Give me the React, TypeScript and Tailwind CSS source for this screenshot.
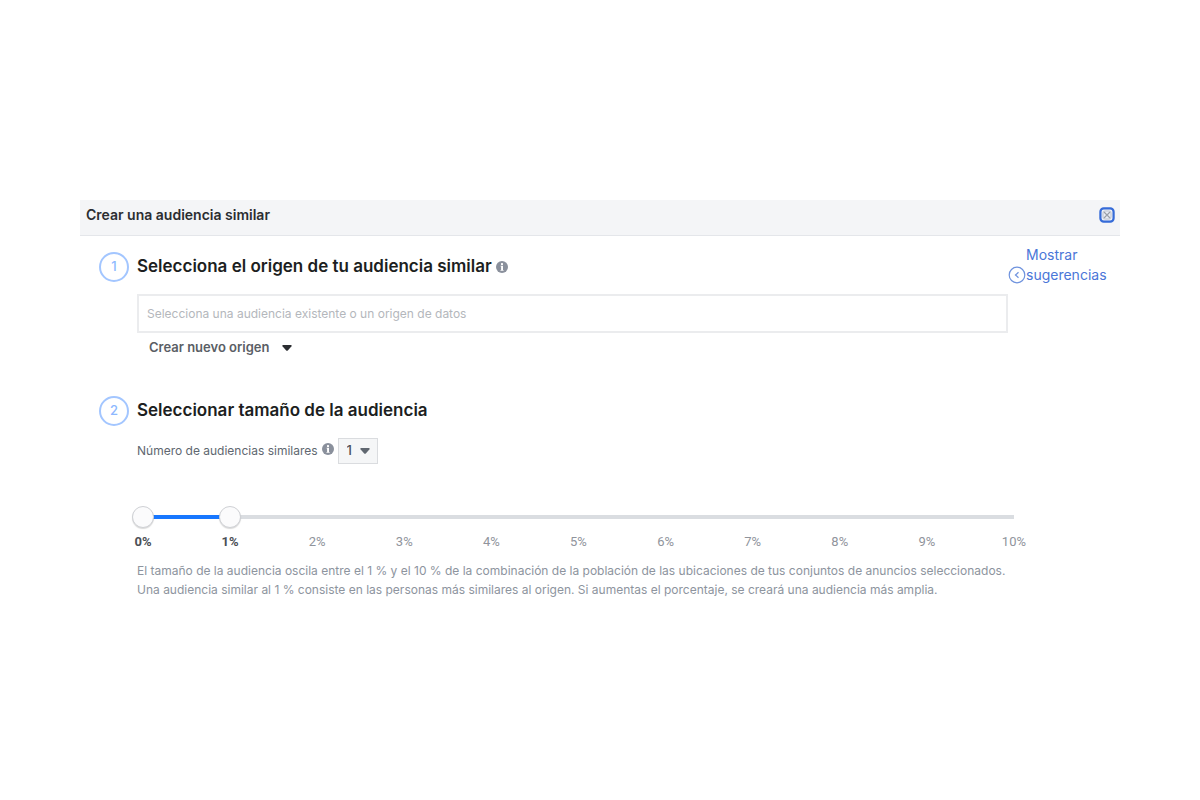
import React, { useState } from "react";

const MAX_PERCENT = 10;
const ticks = Array.from({ length: MAX_PERCENT + 1 }, (_, i) => i);

const thumbClasses =
  "pointer-events-none absolute inset-0 h-[22px] w-full appearance-none bg-transparent outline-none [&::-webkit-slider-thumb]:pointer-events-auto [&::-webkit-slider-thumb]:size-[22px] [&::-webkit-slider-thumb]:cursor-pointer [&::-webkit-slider-thumb]:appearance-none [&::-webkit-slider-thumb]:rounded-full [&::-webkit-slider-thumb]:border [&::-webkit-slider-thumb]:border-[#cfd1d5] [&::-webkit-slider-thumb]:bg-[#fbfbfc] [&::-webkit-slider-thumb]:shadow-[0_1px_1px_rgba(0,0,0,0.15)]";

function InfoIcon() {
  return (
    <svg viewBox="0 0 12 12" className="size-3 shrink-0" aria-hidden="true">
      <circle cx="6" cy="6" r="6" fill="#8a909c" />
      <rect x="5" y="2" width="2" height="2" rx="0.6" fill="#fff" />
      <path d="M4.6 4.8H7V9h.6v.8H4.5V9h.6V5.6h-.5z" fill="#fff" />
    </svg>
  );
}

function Caret({ className }: { className: string }) {
  return (
    <svg viewBox="0 0 10 6" className={className} aria-hidden="true">
      <path d="M1 0h8q1 .3.5 1.2L5.8 5.4q-.8.8-1.6 0L.5 1.2Q0 .3 1 0z" fill="currentColor" />
    </svg>
  );
}

function StepNumber({ value }: { value: number }) {
  return (
    <span className="flex size-[30px] shrink-0 items-center justify-center rounded-full border-2 border-[#a3c6ff] text-[13px] font-medium text-[#8db8ff]">
      {value}
    </span>
  );
}

export default function App() {
  const [source, setSource] = useState("");
  const [count, setCount] = useState("1");
  const [from, setFrom] = useState(0);
  const [to, setTo] = useState(1);

  const low = Math.min(from, to);
  const high = Math.max(from, to);

  return (
    <main className="min-h-screen bg-white px-20 pt-50 font-['Inter',sans-serif]">
      <header className="flex h-9 items-center justify-between border-b border-[#e4e6ea] bg-[#f4f5f7] pr-[5px] pl-1.5">
        <h1 className="pb-1.5 text-sm font-semibold text-[#2b2d31]">Crear una audiencia similar</h1>
        <button type="button" aria-label="Cerrar" className="mb-1.5">
          <svg viewBox="0 0 16 16" className="size-4" fill="none">
            <rect x="1.4" y="1.4" width="13.2" height="13.2" rx="3.4" fill="#e9edf5" stroke="#356bd8" strokeWidth="2.2" />
            <path d="M5 5l6 6M11 5l-6 6" stroke="#9a9fa8" strokeWidth="1.2" />
            <rect x="4" y="4" width="8" height="8" rx="2" stroke="#b5bac4" strokeWidth="0.8" />
          </svg>
        </button>
      </header>

      {/* Paso 1: origen */}
      <section className="flex gap-2 pt-4 pl-[19px]">
        <StepNumber value={1} />
        <div className="min-w-0 flex-1">
          <h2 className="flex h-[30px] items-center gap-1 text-[17px] font-semibold text-[#1c1e21]">
            <label htmlFor="source">Selecciona el origen de tu audiencia similar</label>
            <InfoIcon />
          </h2>
          <input
            id="source"
            type="text"
            value={source}
            onChange={(e) => setSource(e.target.value)}
            placeholder="Selecciona una audiencia existente o un origen de datos"
            className="mt-3 block h-[39px] w-full border-2 border-[#ebecee] px-2 text-xs outline-none placeholder:text-[#b4b7bc]"
          />
          <button
            type="button"
            className="mt-[5px] ml-3 flex h-5 items-center gap-3 text-[13px] font-semibold text-[#5a5e65]"
          >
            Crear nuevo origen
            <Caret className="h-1.5 w-2.5 text-[#2b2d31]" />
          </button>
        </div>
        <a href="#sugerencias" className="-mt-[7px] -ml-2 flex h-10 w-28 items-end text-sm leading-5 text-[#4a76d8]">
          <svg viewBox="0 0 18 18" className="mb-px size-[18px] shrink-0" fill="none" stroke="#6f93de" aria-hidden="true">
            <circle cx="9" cy="9" r="7.8" strokeWidth="1.2" />
            <path d="M10.5 6.3L7.5 9l3 2.7" strokeWidth="1.3" />
          </svg>
          <span>
            Mostrar
            <br />
            sugerencias
          </span>
        </a>
      </section>

      {/* Paso 2: tamaño */}
      <section className="flex gap-2 pt-[38px] pr-28 pl-[19px]">
        <StepNumber value={2} />
        <div className="min-w-0 flex-1">
          <h2 className="flex h-[30px] items-center text-[17px] font-semibold text-[#1c1e21]">
            Seleccionar tamaño de la audiencia
          </h2>
          <div className="mt-3 flex h-[26px] items-center">
            <label htmlFor="count" className="text-xs text-[#606770]">
              Número de audiencias similares
            </label>
            <span className="mr-1 mb-1 ml-1 flex">
              <InfoIcon />
            </span>
            <div className="relative">
              <select
                id="count"
                value={count}
                onChange={(e) => setCount(e.target.value)}
                className="block h-[26px] w-10 appearance-none border border-[#dadcdf] bg-[#f5f6f7] pl-2 text-[13px] font-medium text-[#4b4f56]"
              >
                {["1", "2", "3", "4", "5", "6"].map((n) => (
                  <option key={n}>{n}</option>
                ))}
              </select>
              <Caret className="pointer-events-none absolute top-2.5 right-2 h-1.5 w-2.5 text-[#606770]" />
            </div>
          </div>

          <div className="relative -mr-[17px] -ml-[5px] mt-[42px] h-[22px]">
            <div className="absolute inset-x-[11px] top-[9px] h-1 bg-[#dadde1]">
              <div
                className="h-full bg-[#1877ff]"
                style={{
                  marginLeft: `${(low / MAX_PERCENT) * 100}%`,
                  width: `${((high - low) / MAX_PERCENT) * 100}%`,
                }}
              />
            </div>
            <input
              type="range"
              aria-label="Porcentaje inicial"
              min={0}
              max={MAX_PERCENT}
              value={from}
              onChange={(e) => setFrom(Number(e.target.value))}
              className={thumbClasses}
            />
            <input
              type="range"
              aria-label="Porcentaje final"
              min={0}
              max={MAX_PERCENT}
              value={to}
              onChange={(e) => setTo(Number(e.target.value))}
              className={thumbClasses}
            />
          </div>
          <ol className="mt-1 -mr-5 -ml-2 flex justify-between font-['Roboto',sans-serif] text-[13px] leading-5">
            {ticks.map((t) => (
              <li
                key={t}
                className={
                  t === from || t === to
                    ? "w-7 text-center font-bold text-[#4b4f56]"
                    : "w-7 text-center text-[#90949c]"
                }
              >
                {t}%
              </li>
            ))}
          </ol>

          <p className="mt-[9px] -mr-5 text-xs leading-[19px] text-[#8d949e]">
            El tamaño de la audiencia oscila entre el 1 % y el 10 % de la combinación de la población de las
            ubicaciones de tus conjuntos de anuncios seleccionados.
            <br />
            Una audiencia similar al 1 % consiste en las personas más similares al origen. Si aumentas el
            porcentaje, se creará una audiencia más amplia.
          </p>
        </div>
      </section>
    </main>
  );
}
